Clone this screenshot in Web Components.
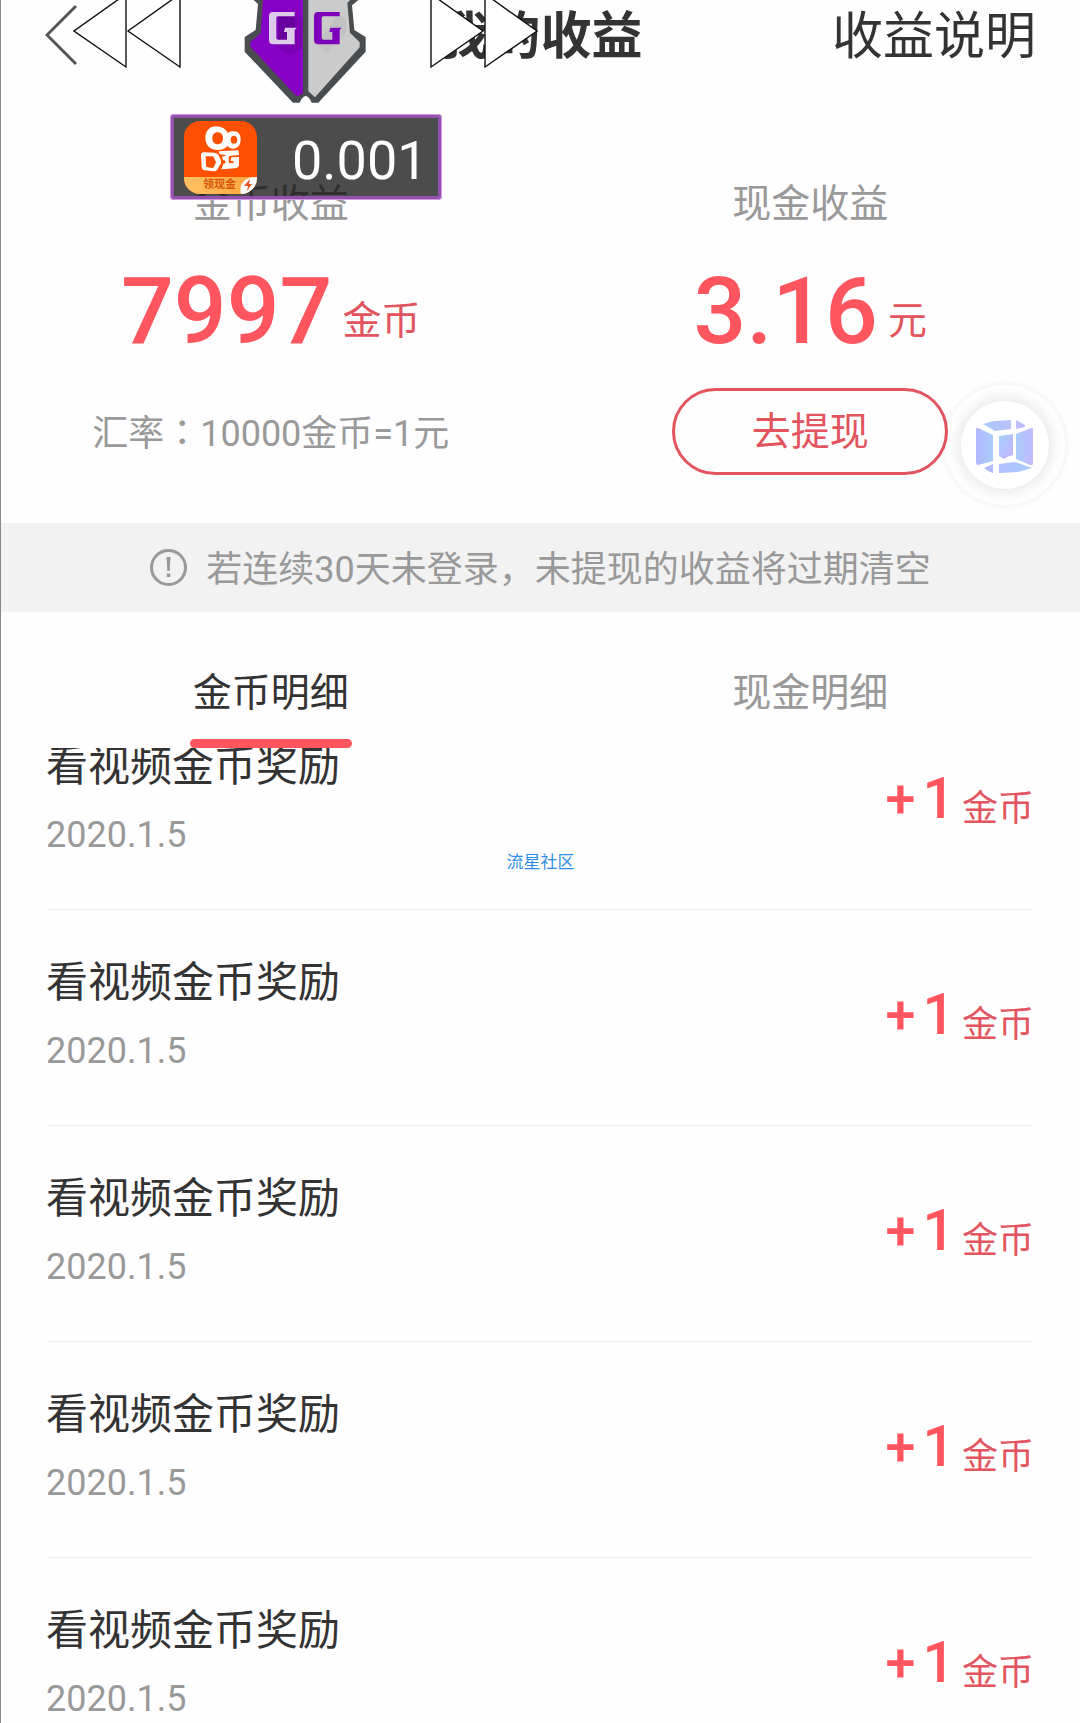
<!DOCTYPE html>
<html lang="zh-CN">
<head>
<meta charset="utf-8">
<meta name="viewport" content="width=device-width, initial-scale=1">
<title>我的收益</title>
<style>
  body {
    margin: 0;
    background: #fefefe;
    color: #333;
    font-family: Roboto, "Noto Sans CJK SC", sans-serif;
    --red: #ff555f;
    --red-thin: #e2545e;
    --grey: #999;
    --edge: 46px;
  }
</style>
</head>
<body>
<income-page>
  <income-header slot="header" heading="我的收益" more="收益说明"></income-header>
  <income-summary slot="summary">
    <income-balance label="金币收益" value="7997" unit="金币">
      <exchange-rate></exchange-rate>
    </income-balance>
    <income-balance label="现金收益" value="3.16" unit="元">
      <pill-button>去提现</pill-button>
    </income-balance>
  </income-summary>
  <notice-bar slot="notice">若连续30天未登录，未提现的收益将过期清空</notice-bar>
  <detail-tabs slot="tabs"></detail-tabs>
  <income-record heading="看视频金币奖励" date="2020.1.5" amount="1" unit="金币"></income-record>
  <income-record heading="看视频金币奖励" date="2020.1.5" amount="1" unit="金币"></income-record>
  <income-record heading="看视频金币奖励" date="2020.1.5" amount="1" unit="金币"></income-record>
  <income-record heading="看视频金币奖励" date="2020.1.5" amount="1" unit="金币"></income-record>
  <income-record heading="看视频金币奖励" date="2020.1.5" amount="1" unit="金币"></income-record>
  <speed-arrows slot="overlay" class="back"></speed-arrows>
  <speed-arrows slot="overlay" class="forward"></speed-arrows>
  <shield-logo slot="overlay"></shield-logo>
  <reward-badge slot="overlay">0.001</reward-badge>
  <cube-bubble slot="overlay"></cube-bubble>
  <page-stamp slot="overlay">流星社区</page-stamp>
</income-page>

<script>
const define = (name, markup) => customElements.define(name, class extends HTMLElement {
  constructor() {
    super();
    const attr = key => this.getAttribute(key) || '';
    this.attachShadow({ mode: 'open' }).innerHTML = markup(attr);
  }
});

define('income-page', () => `
<style>
  :host { display: flex; flex-direction: column; position: relative; height: 100vh; overflow: hidden; box-sizing: border-box; border-left: 1px solid #888; }
  main { flex: 1; min-height: 0; overflow: hidden; }
  /* the list is scrolled part of the way under the tabs */
  .scrolled { margin-top: -54px; }
  ::slotted([slot=overlay]) { position: absolute; }
  ::slotted(speed-arrows.back) { left: 72px; top: -7px; }
  ::slotted(speed-arrows.forward) { left: 428px; top: -7px; transform: scaleX(-1); }
  ::slotted(shield-logo) { left: 243px; top: 0; }
  ::slotted(reward-badge) { left: 169px; top: 114px; }
  ::slotted(cube-bubble) { right: 9px; top: 379px; }
  ::slotted(page-stamp) { left: 0; right: 0; top: 850px; }
</style>
<slot name="header"></slot>
<slot name="summary"></slot>
<slot name="notice"></slot>
<slot name="tabs"></slot>
<main><div class="scrolled"><slot></slot></div></main>
<slot name="overlay"></slot>`);

define('income-header', attr => `
<style>
  :host { display: grid; grid-template-columns: 1fr auto 1fr; align-items: center; padding: 0 44px; font-size: 51px; line-height: 74px; }
  button { justify-self: start; border: 0; background: none; padding: 0; display: flex; }
  h1 { margin: 0; font-size: inherit; font-weight: 700; }
  a { justify-self: end; color: inherit; text-decoration: none; }
</style>
<button aria-label="返回"><svg width="34" height="66" viewBox="0 0 34 66" fill="none" stroke="#555" stroke-width="3"><path d="M31 2 2 31 31 60"/></svg></button>
<h1>${attr('heading')}</h1>
<a href="#rules">${attr('more')}</a>`);

define('income-summary', () => `
<style>
  :host { display: grid; grid-template-columns: 1fr 1fr; padding: 100px 0 48px; }
</style>
<slot></slot>`);

define('income-balance', attr => `
<style>
  :host { display: flex; flex-direction: column; align-items: center; gap: 27px; font-size: 39px; }
  .label { line-height: 60px; color: var(--grey); }
  .amount { display: flex; align-items: flex-end; gap: 10px; height: 100px; }
  .value { font-size: 93px; line-height: 98px; font-weight: 500; color: var(--red); }
  .unit { line-height: 80px; color: var(--red-thin); }
  .foot { display: flex; align-items: center; height: 87px; }
</style>
<div class="label">${attr('label')}</div>
<div class="amount"><span class="value">${attr('value')}</span><span class="unit">${attr('unit')}</span></div>
<div class="foot"><slot></slot></div>`);

define('exchange-rate', () => `
<style>
  :host { display: block; font-size: 36px; line-height: 50px; color: var(--grey); }
  .colon { font-family: "Noto Sans CJK JP", sans-serif; }
</style>
汇率<span class="colon" lang="ja">：</span>10000金币=1元`);

define('pill-button', () => `
<style>
  :host { display: block; }
  button { width: 276px; height: 87px; padding: 0; border: 3px solid var(--red-thin); border-radius: 44px; background: none; color: var(--red-thin); font: inherit; font-size: 39px; line-height: 60px; }
</style>
<button><slot></slot></button>`);

define('notice-bar', () => `
<style>
  :host { display: flex; align-items: center; justify-content: center; gap: 19px; height: 89px; background: #f2f2f2; color: var(--grey); font-size: 36px; line-height: 50px; }
  span { padding-top: 4px; }
</style>
<svg width="37" height="37" viewBox="0 0 37 37" fill="none" stroke="#999" stroke-width="3"><circle cx="18.5" cy="18.5" r="17"/><path d="M16.5 8h4l-.8 14h-2.4zM16.7 24.5h3.6v3.6h-3.6z" fill="#999" stroke="none"/></svg>
<span><slot></slot></span>`);

define('detail-tabs', () => `
<style>
  :host { display: grid; grid-template-columns: 1fr 1fr; justify-items: center; padding-top: 51px; }
  button { display: flex; flex-direction: column; align-items: center; gap: 16px; border: 0; background: none; padding: 0; font: inherit; font-size: 39px; line-height: 60px; color: var(--grey); }
  button::after { content: ""; width: 162px; height: 9px; border-radius: 5px; }
  [aria-selected=true] { color: #333; }
  [aria-selected=true]::after { background: var(--red); }
</style>
<button role="tab" aria-selected="true">金币明细</button>
<button role="tab" aria-selected="false">现金明细</button>`);

define('income-record', attr => `
<style>
  :host { display: flex; align-items: center; justify-content: space-between; margin: 0 var(--edge) 0 45px; padding: 43px 0 49px; border-bottom: 1px solid #f0f0f0; }
  .text { display: flex; flex-direction: column; gap: 13px; }
  .title { font-size: 42px; line-height: 60px; }
  .date { font-size: 36px; line-height: 50px; color: var(--grey); }
  .amount { display: flex; align-items: flex-end; gap: 7px; font-size: 57px; line-height: 83px; font-weight: 500; color: var(--red); }
  .plus { font-size: 54px; }
  .unit { font-size: 36px; line-height: 62px; font-weight: 400; color: var(--red-thin); }
</style>
<div class="text"><span class="title">${attr('heading')}</span><span class="date">${attr('date')}</span></div>
<div class="amount"><span class="plus">+</span><span>${attr('amount')}</span><span class="unit">${attr('unit')}</span></div>`);

define('speed-arrows', () => `
<style>:host { display: block; } svg { display: block; }</style>
<svg width="109" height="76" viewBox="0 0 109 76" fill="#fff" stroke="#111" stroke-width="1.4"><path d="M53 1 1 38 53 74z"/><path d="M107 1 55 38 107 74z"/></svg>`);

define('shield-logo', () => `
<style>:host { display: block; } svg { display: block; }</style>
<svg width="122" height="104" viewBox="43 0 366 312">
  <path fill="#4a4d4f" d="M72 0 85 12 78 90 45 111V155L190 308H210Q228 268 246 308H266L408 155V111L374 90 367 16 386 0z"/>
  <path fill="#8700c5" d="M100 0 93 100 62 126V140L196 284Q205 294 220 279V0z"/>
  <path fill="#cbcbcb" d="M236 0V274L256 292 390 142V127L361 98 353 8 362 0z"/>
  <path fill="#6f00a4" d="M195 38 220 62V145L180 165 128 132 165 80z" opacity=".5"/>
  <path fill="#b7b7b7" d="M330 38 348 58 350 98 290 160 258 130 300 80z" opacity=".45"/>
  <path fill="#5d0090" d="M145 49H195V83H166L163 96H172V119H145z" opacity=".7"/>
  <path fill="#dccbe9" d="M130 36H195V49H145Q140 49 140 55V113Q140 119 146 119H172V96H163L166 83H201L195 90V133H131Q118 133 118 120V49Q118 36 130 36z"/>
  <path fill="#7d00bb" d="M266 36H330V49H281Q276 49 276 55V113Q276 119 282 119H308V96H299L302 83H336L330 90V133H267Q253 133 253 120V49Q253 36 266 36z"/>
</svg>`);

define('reward-badge', () => `
<style>
  :host { display: flex; align-items: center; gap: 35px; box-sizing: border-box; width: 272px; height: 86px; padding: 0 10px; border: 4px solid #9450ad; outline: 1px solid #cf9be2; outline-offset: -1px; border-radius: 4px; background: rgba(0, 0, 0, .7); background-clip: padding-box; color: #fff; font-size: 54px; line-height: 72px; }
  .app { display: flex; flex-direction: column; position: relative; width: 73px; height: 73px; border-radius: 16px; overflow: hidden; background: #ff5000; }
  .app svg { display: block; }
  .tag { height: 17px; padding-left: 19px; background: linear-gradient(90deg, #ffc163, #ffa53c); color: #d4560c; font-size: 11px; line-height: 16px; font-weight: 700; }
  .bolt { position: absolute; right: 0; bottom: 0; }
  .sum { padding-top: 8px; }
</style>
<div class="app">
  <svg width="73" height="56" viewBox="0 0 219 168">
    <path fill="#fff" fill-rule="evenodd" d="M96 16c18 0 30 9 35 20 6-4 12-5 18-5 14 0 21 10 21 24 0 16-8 28-22 28-8 0-14-3-18-8-6 8-17 12-29 12-24 0-37-16-37-36 0-21 13-35 32-35zM101 34c-10 0-16 7-16 18s6 18 16 18 16-7 16-18-6-18-16-18zM150 44c-6 0-10 4-10 12s4 12 10 12 10-5 10-12-4-12-10-12z"/>
    <path fill="#fff" fill-rule="evenodd" d="M58 94 92 95Q101 96 105 105L111 119Q113 124 109 130L101 144Q97 152 90 151L62 148Q54 147 53 138L51 104Q51 95 58 94zM65 106 66 135Q67 139 71 139L84 141Q88 141 90 137L96 124 90 110Q88 106 84 106z"/>
    <path fill="#fff" d="M104 91 163 88 165 102 141 104Q134 104 134 111L135 127 149 126V121L140 120 142 109 165 108V130Q165 141 153 142L112 145 118 128 124 127V119L117 117 114 107 124 105V102L107 100z"/>
  </svg>
  <div class="tag">领现金</div>
  <svg class="bolt" width="17" height="17" viewBox="0 0 17 17"><path fill="#fff" d="M17 0V17H1Q-1 9 4 4 9 0 17 0z"/><path fill="#e4541c" d="M10 2 4 9H8L7 14 12 7H9z"/></svg>
</div>
<span class="sum"><slot></slot></span>`);

define('cube-bubble', () => `
<style>:host { display: block; } svg { display: block; }</style>
<svg width="132" height="132" viewBox="-3 -3 132 132">
  <defs>
    <radialGradient id="halo"><stop offset=".66" stop-opacity=".06"/><stop offset=".8" stop-opacity=".012"/><stop offset=".9" stop-opacity="0"/><stop offset=".92" stop-opacity=".03"/><stop offset="1" stop-opacity="0"/></radialGradient>
    <linearGradient id="side"><stop offset="0" stop-color="#b3b7ff"/><stop offset="1" stop-color="#a8cdfb"/></linearGradient>
    <linearGradient id="side2"><stop offset="0" stop-color="#a8cafb"/><stop offset="1" stop-color="#c3bbfc"/></linearGradient>
    <linearGradient id="core" x2="1" y2="1"><stop offset="0" stop-color="#a5d0fa"/><stop offset="1" stop-color="#c4b2ff"/></linearGradient>
  </defs>
  <circle cx="63" cy="63" r="66" fill="url(#halo)"/>
  <circle cx="63" cy="63" r="44" fill="#fff"/>
  <path fill="url(#side)" d="M36 46 51 53V79L36 83Q34 83 34 80V48Q34 45 36 46z"/>
  <path fill="url(#side2)" d="M89 46 74 52V77L88 83Q91 84 91 81V48Q91 45 89 46z"/>
  <path fill="url(#core)" d="M57 54 71 52V73L65 75 62 77 57 74z"/>
  <path fill="url(#side2)" d="M41 42 52 39 69 38V47L53 49zM74 38 83 43V45L74 47z"/>
  <path fill="url(#side)" d="M42 86 51 82V91L46 89zM57 82 73 80 90 86 76 90 57 91z"/>
</svg>`);

define('page-stamp', () => `
<style>:host { display: block; text-align: center; color: #2f8fe6; font-size: 17px; line-height: 24px; pointer-events: none; }</style>
<slot></slot>`);
</script>
</body>
</html>
